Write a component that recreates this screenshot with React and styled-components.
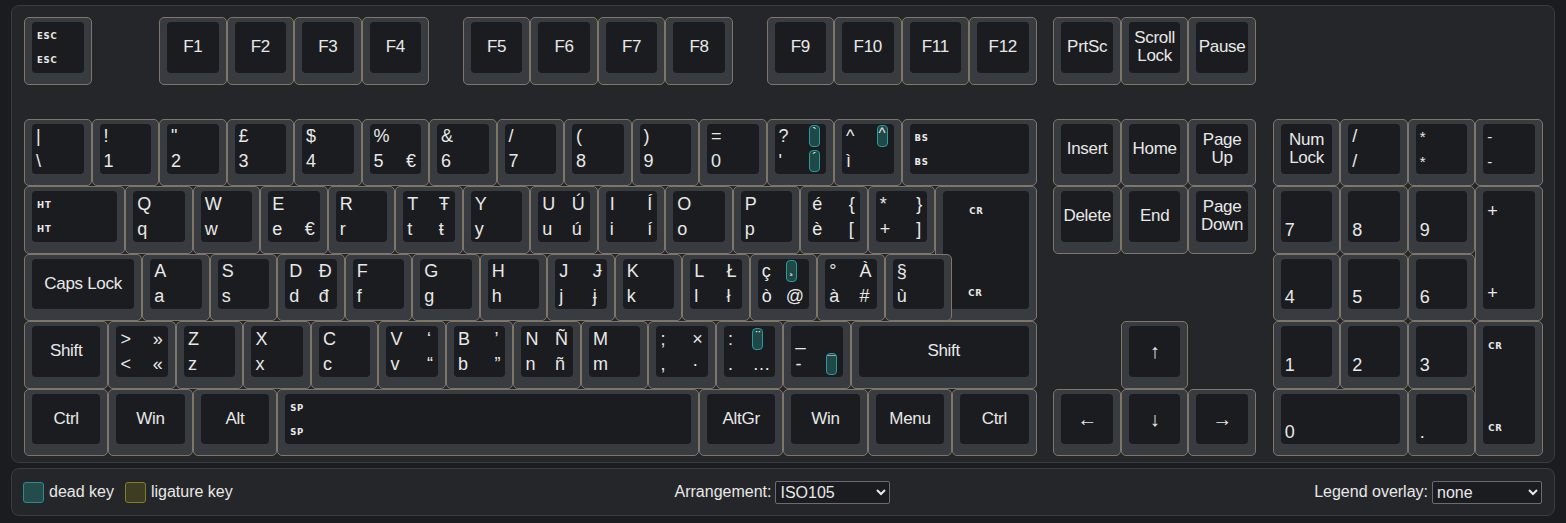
import React from "react";
import styled, { createGlobalStyle } from "styled-components";

const Global = createGlobalStyle`
  html, body { margin: 0; background: #1b1c1f; }
  body { padding: 5px 11px 0 11px; font-family: "Liberation Sans", Arial, sans-serif; color: #e8e8e8; }
`;

const U = 16.875;

const Panel = styled.div`
  background: #252629;
  border: 1px solid #3a3c40;
  border-radius: 8px;
  padding: 11px 12px 6px 12px;
  width: 1544px;
  box-sizing: border-box;
`;

const Board = styled.div`
  display: grid;
  grid-template-columns: repeat(90, ${U}px);
  grid-template-rows: 67.5px 34px repeat(5, 67.5px);
`;

const KeyOuter = styled.div`
  grid-column: ${(p) => p.$c * 4 + 1} / span ${(p) => p.$w * 4};
  grid-row: ${(p) => p.$r + 1} / span ${(p) => p.$h};
  z-index: ${(p) => (p.$top ? 2 : 1)};
  box-sizing: border-box;
  border: 1px solid #7f7667;
  border-radius: 5px;
  background: #383b3f;
  padding: 4px 7px 11px 7px;
`;

const Cap = styled.div`
  height: 100%;
  box-sizing: border-box;
  background: #1b1c1f;
  border-radius: 4px;
  padding: ${(p) => (p.$tall ? "10px 5px 6px 4px" : "0 5px 0 4px")};
  display: grid;
  grid-template-columns: 1fr auto;
  grid-template-rows: 1fr 1fr;
  align-items: ${(p) => (p.$tall ? "start" : "center")};
  font-size: 18px;
  line-height: 20px;
`;

const Tall2 = styled.div`
  grid-row: 2;
  align-self: end;
`;

const Center = styled.div`
  height: 100%;
  box-sizing: border-box;
  background: #1b1c1f;
  border-radius: 4px;
  display: flex;
  align-items: center;
  justify-content: center;
  text-align: center;
  font-size: 17px;
  line-height: 18px;
  letter-spacing: -0.3px;
`;

const Small = styled.div`
  font-family: "DejaVu Sans", sans-serif;
  font-weight: bold;
  font-size: 8.5px;
  letter-spacing: 0.8px;
  padding-left: 1px;
`;

const Dead = styled.span`
  display: inline-flex;
  justify-content: center;
  align-items: flex-start;
  width: 11px;
  height: 22px;
  box-sizing: border-box;
  background: #1f4848;
  border: 1px solid #2a9a9a;
  border-radius: 4px;
  font-size: 15px;
  line-height: 13px;
  margin-right: 1px;
`;

const NumLow = styled.div`
  grid-row: 2;
  align-self: end;
  padding-bottom: 2px;
`;

const Bar = styled.div`
  margin-top: 5px;
  width: 1544px;
  box-sizing: border-box;
  height: 48px;
  background: #252629;
  border: 1px solid #3a3c40;
  border-radius: 8px;
  display: grid;
  grid-template-columns: 1fr auto 1fr;
  align-items: center;
  padding: 0 12px 0 11px;
  font-size: 16px;
`;

const Legend = styled.div`
  display: flex;
  align-items: center;
  gap: 5px;
`;

const Swatch = styled.span`
  width: 21px;
  height: 21px;
  box-sizing: border-box;
  border-radius: 3px;
  background: ${(p) => p.$bg};
  border: 1px solid ${(p) => p.$bd};
  margin-left: ${(p) => p.$ml || 0}px;
`;

const Right = styled.div`
  justify-self: end;
  display: flex;
  align-items: center;
  gap: 4px;
`;

const Mid = styled.div`
  display: flex;
  align-items: center;
  gap: 4px;
`;

const Select = styled.select`
  background: #1b1c1f;
  color: #e8e8e8;
  border: 1px solid #6a6c70;
  border-radius: 2px;
  font-family: "Liberation Sans", Arial, sans-serif;
  font-size: 16px;
  height: 23px;
  width: ${(p) => p.$w}px;
`;

const D = (ch) => ({ dead: ch });
const keys = [];
const k = (c, r, w, spec, h = 1, top = false) => keys.push({ c, r, w, h, spec, top });

k(0, 0, 1, { small: ["ESC", "ESC"] });
["F1", "F2", "F3", "F4"].forEach((f, i) => k(2 + i, 0, 1, { center: f }));
["F5", "F6", "F7", "F8"].forEach((f, i) => k(6.5 + i, 0, 1, { center: f }));
["F9", "F10", "F11", "F12"].forEach((f, i) => k(11 + i, 0, 1, { center: f }));
k(15.25, 0, 1, { center: "PrtSc" });
k(16.25, 0, 1, { center: "Scroll\nLock" });
k(17.25, 0, 1, { center: "Pause" });

const N = 18.5;

const r1 = [
  ["|", "\\"], ["!", "1"], ['"', "2"], ["£", "3"], ["$", "4"], ["%", "5", "", "€"],
  ["&", "6"], ["/", "7"], ["(", "8"], [")", "9"], ["=", "0"],
  ["?", "'", D("`"), D("´")], ["^", "ì", D("^"), ""],
];
r1.forEach((l, i) => k(i, 2, 1, { l }));
k(13, 2, 2, { small: ["BS", "BS"] });
k(15.25, 2, 1, { center: "Insert" });
k(16.25, 2, 1, { center: "Home" });
k(17.25, 2, 1, { center: "Page\nUp" });
k(N, 2, 1, { center: "Num\nLock" });
k(N + 1, 2, 1, { l: ["/", "/"] });
k(N + 2, 2, 1, { l: ["*", "*"], sm: true });
k(N + 3, 2, 1, { l: ["-", "-"], sm: true });

k(0, 3, 1.5, { small: ["HT", "HT"] });
const r2 = [
  ["Q", "q"], ["W", "w"], ["E", "e", "", "€"], ["R", "r"], ["T", "t", "Ŧ", "ŧ"], ["Y", "y"],
  ["U", "u", "Ú", "ú"], ["I", "i", "Í", "í"], ["O", "o"], ["P", "p"], ["é", "è", "{", "["], ["*", "+", "}", "]"],
];
r2.forEach((l, i) => k(1.5 + i, 3, 1, { l }));
k(13.5, 3, 1.5, { enter: true }, 2);
k(15.25, 3, 1, { center: "Delete" });
k(16.25, 3, 1, { center: "End" });
k(17.25, 3, 1, { center: "Page\nDown" });
k(N, 3, 1, { num: "7" });
k(N + 1, 3, 1, { num: "8" });
k(N + 2, 3, 1, { num: "9" });
k(N + 3, 3, 1, { tall: ["+", "+"] }, 2);

k(0, 4, 1.75, { center: "Caps Lock" });
const r3 = [
  ["A", "a"], ["S", "s"], ["D", "d", "Đ", "đ"], ["F", "f"], ["G", "g"], ["H", "h"],
  ["J", "j", "Ɉ", "ɉ"], ["K", "k"], ["L", "l", "Ł", "ł"], ["ç", "ò", D("¸"), "@"], ["°", "à", "À", "#"], ["§", "ù"],
];
r3.forEach((l, i) => k(1.75 + i, 4, 1, { l }, 1, true));
k(N, 4, 1, { num: "4" });
k(N + 1, 4, 1, { num: "5" });
k(N + 2, 4, 1, { num: "6" });

k(0, 5, 1.25, { center: "Shift" });
const r4 = [
  [">", "<", "»", "«"], ["Z", "z"], ["X", "x"], ["C", "c"], ["V", "v", "‘", "“"], ["B", "b", "’", "”"],
  ["N", "n", "Ñ", "ñ"], ["M", "m"], [";", ",", "×", "·"], [":", ".", D("¨"), "…"], ["_", "-", "", D("¯")],
];
r4.forEach((l, i) => k(1.25 + i, 5, 1, { l }));
k(12.25, 5, 2.75, { center: "Shift" });
k(16.25, 5, 1, { center: "↑", big: true });
k(N, 5, 1, { num: "1" });
k(N + 1, 5, 1, { num: "2" });
k(N + 2, 5, 1, { num: "3" });
k(N + 3, 5, 1, { tallSmall: ["CR", "CR"] }, 2);

k(0, 6, 1.25, { center: "Ctrl" });
k(1.25, 6, 1.25, { center: "Win" });
k(2.5, 6, 1.25, { center: "Alt" });
k(3.75, 6, 6.25, { small: ["SP", "SP"] });
k(10, 6, 1.25, { center: "AltGr" });
k(11.25, 6, 1.25, { center: "Win" });
k(12.5, 6, 1.25, { center: "Menu" });
k(13.75, 6, 1.25, { center: "Ctrl" });
k(15.25, 6, 1, { center: "←", big: true });
k(16.25, 6, 1, { center: "↓", big: true });
k(17.25, 6, 1, { center: "→", big: true });
k(N, 6, 2, { num: "0" });
k(N + 2, 6, 1, { num: "." });

const Lbl = ({ v }) => (v && v.dead ? <Dead>{v.dead}</Dead> : <span>{v}</span>);

const SmallCap = styled(Cap)`
  grid-template-columns: 1fr;
  padding-top: 2px;
`;

const EnterSmall = styled.div`
  font-family: "DejaVu Sans", sans-serif;
  font-weight: bold;
  font-size: 8.5px;
  letter-spacing: 0.8px;
  padding-left: ${(p) => p.$pl}px;
  align-self: ${(p) => p.$al};
  grid-column: 1 / span 2;
  grid-row: ${(p) => p.$row};
  padding-bottom: ${(p) => (p.$al === "end" ? 0 : 0)}px;
`;

const SmallAsterisk = styled.span`
  font-size: 15px;
`;

function KeyBody({ spec }) {
  if (spec.center !== undefined)
    return (
      <Center style={spec.big ? { fontSize: 20 } : undefined}>
        <span style={{ whiteSpace: "pre" }}>{spec.center}</span>
      </Center>
    );
  if (spec.small)
    return (
      <SmallCap>
        <Small>{spec.small[0]}</Small>
        <Small>{spec.small[1]}</Small>
      </SmallCap>
    );
  if (spec.enter)
    return (
      <Cap $tall>
        <EnterSmall $pl={22} $al="start" $row={1}>CR</EnterSmall>
        <EnterSmall $pl={21} $al="end" $row={2}>CR</EnterSmall>
      </Cap>
    );
  if (spec.tall)
    return (
      <Cap $tall>
        <span>{spec.tall[0]}</span>
        <Tall2>{spec.tall[1]}</Tall2>
      </Cap>
    );
  if (spec.tallSmall)
    return (
      <Cap $tall>
        <Small>{spec.tallSmall[0]}</Small>
        <Tall2><Small>{spec.tallSmall[1]}</Small></Tall2>
      </Cap>
    );
  if (spec.num)
    return (
      <Cap>
        <NumLow>{spec.num}</NumLow>
      </Cap>
    );
  const [a, b, c, d] = spec.l;
  const W = spec.sm ? SmallAsterisk : React.Fragment;
  return (
    <Cap>
      <span><W>{a}</W></span>
      <Lbl v={c} />
      <span><W>{b}</W></span>
      <Lbl v={d} />
    </Cap>
  );
}

export default function App() {
  return (
    <>
      <Global />
      <Panel>
        <Board>
          {keys.map((key, i) => (
            <KeyOuter key={i} $c={key.c} $r={key.r} $w={key.w} $h={key.h} $top={key.top}>
              <KeyBody spec={key.spec} />
            </KeyOuter>
          ))}
        </Board>
      </Panel>
      <Bar>
        <Legend>
          <Swatch $bg="#244c4c" $bd="#2a8c8c" />
          <span>dead key</span>
          <Swatch $bg="#3e3d24" $bd="#807f22" $ml={6} />
          <span>ligature key</span>
        </Legend>
        <Mid>
          <span>Arrangement:</span>
          <Select $w={115} defaultValue="ISO105">
            <option>ISO105</option>
          </Select>
        </Mid>
        <Right>
          <span>Legend overlay:</span>
          <Select $w={110} defaultValue="none">
            <option>none</option>
          </Select>
        </Right>
      </Bar>
    </>
  );
}
